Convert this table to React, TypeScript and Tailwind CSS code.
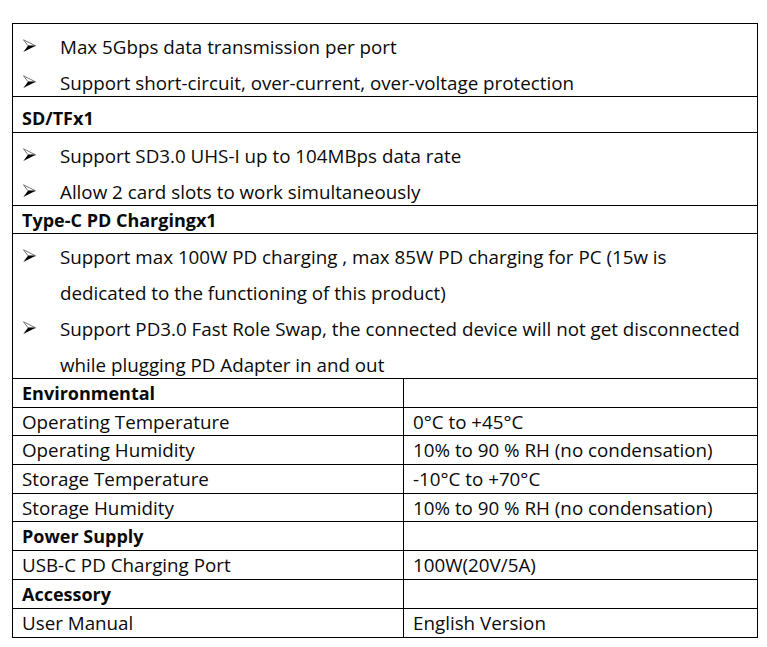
const font = { fontFamily: "'Open Sans', Lato, 'Liberation Sans', sans-serif" };

function Arrow() {
  return (
    <svg width="13" height="14" viewBox="0 0 13 14" className="shrink-0">
      <polygon points="0.5,0.8 12.5,6.8 5,6.8" fill="#fff" stroke="#666" strokeWidth="0.9" strokeLinejoin="round" />
      <polygon points="5,6.8 12.7,6.8 0.3,13" fill="#000" />
    </svg>
  );
}

function Bullets({ items, height }: { items: string[][]; height: string }) {
  return (
    <div className={`border-b border-black pt-[5px] ${height}`}>
      {items.map((lines, i) => (
        <div key={i} className="flex">
          <div className="w-[47px] shrink-0 flex items-start pl-[10px] pt-[10px]">
            <Arrow />
          </div>
          <div>
            {lines.map((l, j) => (
              <div key={j} className="leading-[36px] h-[36px] whitespace-nowrap">
                {l}
              </div>
            ))}
          </div>
        </div>
      ))}
    </div>
  );
}

function Row({ left, right, bold, last }: { left: string; right?: string; bold?: boolean; last?: boolean }) {
  return (
    <div className={`flex h-[28.7px] ${last ? "" : "border-b border-black"}`}>
      <div
        className={`w-[391px] shrink-0 border-r border-black pl-[9px] leading-[28px] ${bold ? "font-bold text-[18px]" : ""}`}
      >
        {left}
      </div>
      <div className="pl-[9px] leading-[28px]">{right}</div>
    </div>
  );
}

export default function App() {
  return (
    <div className="bg-white w-[767px] h-[647px] pt-[23px] pl-[12px] text-[#0a0a0a] text-[18.8px]" style={font}>
      <div className="w-[746px] border border-black">
        <Bullets
          height="h-[73px]"
          items={[["Max 5Gbps data transmission per port"], ["Support short-circuit, over-current, over-voltage protection"]]}
        />
        <div className="h-[36px] border-b border-black pl-[9px] pt-[6px] leading-[30px] font-bold text-[18px]">SD/TFx1</div>
        <Bullets
          height="h-[73px]"
          items={[["Support SD3.0 UHS-I up to 104MBps data rate"], ["Allow 2 card slots to work simultaneously"]]}
        />
        <div className="h-[28px] border-b border-black pl-[9px] leading-[28px] font-bold text-[18px]">
          Type-C PD Chargingx1
        </div>
        <Bullets
          height="h-[145px]"
          items={[
            [
              "Support max 100W PD charging , max 85W PD charging for PC (15w is",
              "dedicated to the functioning of this product)",
            ],
            [
              "Support PD3.0 Fast Role Swap, the connected device will not get disconnected",
              "while plugging PD Adapter in and out",
            ],
          ]}
        />
        <Row left="Environmental" bold />
        <Row left="Operating Temperature" right="0°C to +45°C" />
        <Row left="Operating Humidity" right="10% to 90 % RH (no condensation)" />
        <Row left="Storage Temperature" right="-10°C to +70°C" />
        <Row left="Storage Humidity" right="10% to 90 % RH (no condensation)" />
        <Row left="Power Supply" bold />
        <Row left="USB-C PD Charging Port" right="100W(20V/5A)" />
        <Row left="Accessory" bold />
        <Row left="User Manual" right="English Version" last />
      </div>
    </div>
  );
}
